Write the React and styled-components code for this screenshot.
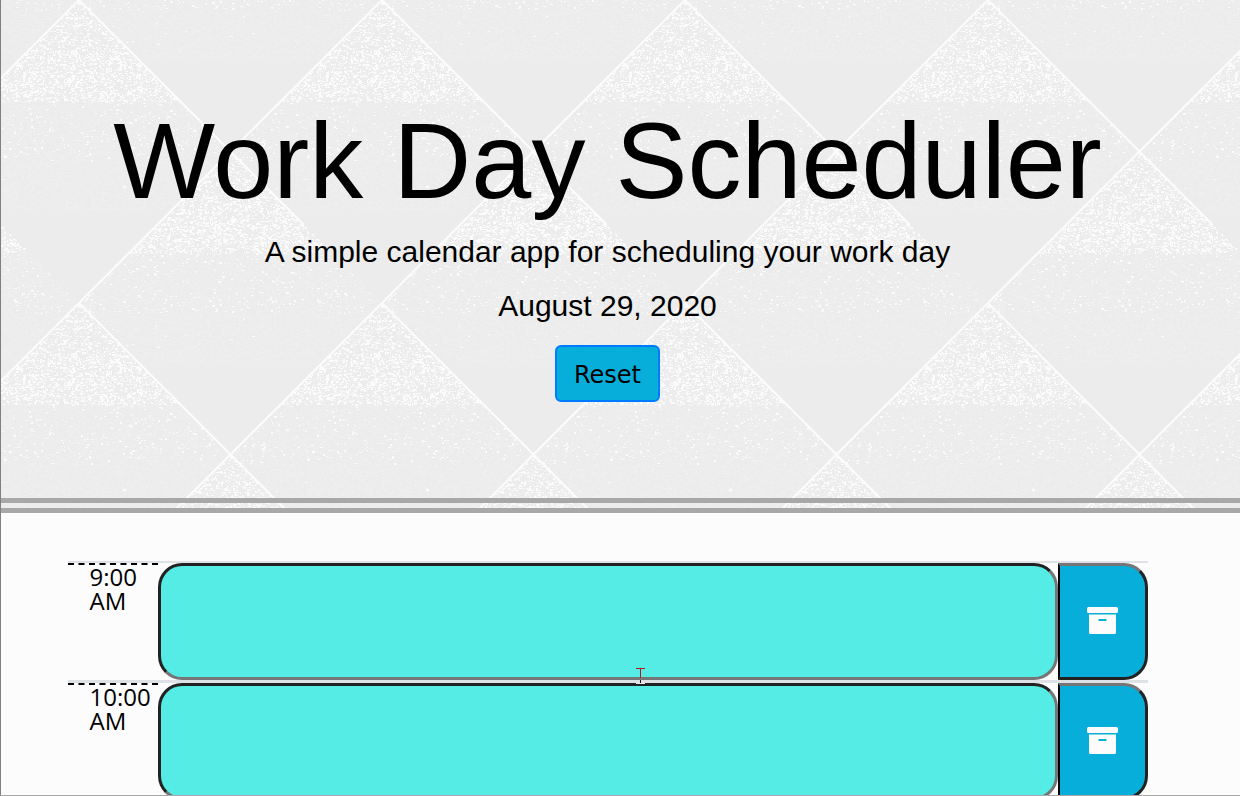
import React from "react";
import styled, { createGlobalStyle } from "styled-components";

const TILE = 303;
const HALF = TILE / 2;
const APEX = 78;

// Share of seeded specks in a diamond at a given distance below its top corner.
function grain(depth) {
  if (depth < 50) return 0.14;
  if (depth < 102) return 0.17;
  if (depth < 130) return 0.018;
  if (depth < 161) return 0.018;
  if (depth < 200) return 0.001;
  return 0;
}

function buildTile() {
  let seed = 20200829;
  const random = () => {
    seed = (Math.imul(seed, 1664525) + 1013904223) >>> 0;
    return seed / 4294967296;
  };
  const apexes = [
    [APEX, 0],
    [APEX + HALF, -HALF],
  ];
  let dots = "";
  let haze = "";
  for (let y = 0; y < TILE; y += 1) {
    for (let x = 0; x < TILE; x += 1) {
      for (const [ax, ay] of apexes) {
        const dx = Math.abs(((x - ax + TILE + HALF) % TILE) - HALF);
        const dy = (y - ay + TILE) % TILE;
        const inside = dx < Math.min(dy, TILE - dy);
        if (inside) {
          const roll = random();
          if (roll < grain(dy)) {
            const width = 1 + Math.floor(random() * 2.4);
            const height = random() < 0.3 ? 2 : 1;
            dots += `M${x} ${y}h${width}v${height}h-${width}z`;
          } else if (dy < 210 && roll > 0.86) {
            haze += `M${x} ${y}h2v1h-2z`;
          }
        }
      }
    }
  }
  const lines = `M${APEX - TILE} ${-TILE}l${TILE * 2} ${TILE * 2}M${APEX} 0l${TILE} ${TILE}M${APEX + TILE} ${-TILE}l${-TILE * 2} ${TILE * 2}M${APEX + TILE} 0l${-TILE} ${TILE}`;
  const svg = `<svg xmlns="http://www.w3.org/2000/svg" width="${TILE}" height="${TILE}"><rect width="${TILE}" height="${TILE}" fill="#ececec"/><path fill="#efefef" d="${haze}"/><path fill="#fbfbfb" d="${dots}"/><path fill="none" stroke="#fcfcfc" stroke-width="2" d="${lines}"/></svg>`;
  return `data:image/svg+xml,${encodeURIComponent(svg)}`;
}

const tile = buildTile();

const GlobalStyle = createGlobalStyle`
  *, *::before, *::after { box-sizing: border-box; }
  body { margin: 0; background: #fcfcfc; color: #000; }
`;

const Page = styled.div`
  position: relative;
  height: 100vh;
  overflow: hidden;
  border-left: 1px solid #808080;
  border-bottom: 1px solid #a8a8a8;
  background: #fcfcfc;
  font-family: "Open Sans", sans-serif;
`;

const Header = styled.header`
  display: flex;
  flex-direction: column;
  align-items: center;
  padding: 96px 26px 96px 0;
  border-bottom: 15px double #a8a8a8;
  background-color: #ececec;
  background-image: url("${tile}");
  font-family: "Liberation Sans", Arial, sans-serif;
  text-align: center;
`;

const Title = styled.h1`
  margin: 0 0 12px;
  font-size: 108px;
  font-weight: 400;
  line-height: 129px;
`;

const Lead = styled.p`
  margin: 0 0 24px;
  font-size: 30px;
  line-height: 30px;
`;

const ResetButton = styled.button`
  height: 57px;
  padding: 2px 17px 0;
  border: 2px solid #007bff;
  border-radius: 6px;
  background: #07aed9;
  color: #000;
  font-family: Verdana, "DejaVu Sans", sans-serif;
  font-size: 24px;
  line-height: 36px;
`;

const Planner = styled.main`
  padding: 48px 26px 0 0;
`;

const Rows = styled.div`
  max-width: 1080px;
  margin: 0 auto;
  border-top: 2px solid #dee2e6;
`;

const Row = styled.form`
  display: grid;
  grid-template-columns: 1fr 10fr 1fr;
  height: 120px;
  border-bottom: 3px solid #dee2e6;
`;

const Hour = styled.label`
  padding-left: 22px;
  border-top: 2px dashed #000;
  font-size: 24px;
  line-height: 24px;
`;

const Task = styled.textarea`
  display: block;
  width: 100%;
  height: 100%;
  padding: 12px 22px;
  border: 3px solid;
  border-color: #222 #767676 #767676 #222;
  border-radius: 24px;
  background: #55ece5;
  font: inherit;
  font-size: 24px;
  resize: none;
`;

const SaveButton = styled.button`
  display: flex;
  align-items: center;
  justify-content: center;
  padding: 0 0 2px;
  border: 3px solid;
  border-left-width: 2px;
  border-color: #767676 #222 #222 #000;
  border-radius: 0 24px 24px 0;
  background: #07aed9;
`;

const TextCursor = styled.svg`
  position: absolute;
  top: 668px;
  left: 635px;
  pointer-events: none;
`;

function ArchiveIcon() {
  return (
    <svg width="31" height="27" viewBox="0 0 31 27" aria-hidden="true">
      <rect width="31" height="6" rx="1.5" fill="#fcfcfc" />
      <path
        fill="#fcfcfc"
        fillRule="evenodd"
        d="M2 7.500H29V25.5Q29 27 27.500 27H3.500Q2 27 2 25.500ZM12 12Q11.500 12 11.500 12.500V13.500Q11.500 14 12 14H19Q19.500 14 19.500 13.500V12.500Q19.500 12 19 12Z"
      />
    </svg>
  );
}

const hours = ["9:00 AM", "10:00 AM"];

export default function App() {
  return (
    <Page>
      <GlobalStyle />
      <Header>
        <Title>Work Day Scheduler</Title>
        <Lead>A simple calendar app for scheduling your work day</Lead>
        <Lead>August 29, 2020</Lead>
        <ResetButton type="button">Reset</ResetButton>
      </Header>
      <Planner>
        <Rows>
          {hours.map((hour, index) => (
            <Row key={hour} onSubmit={(event) => event.preventDefault()}>
              <Hour htmlFor={`task-${index}`}>{hour}</Hour>
              <Task id={`task-${index}`} />
              <SaveButton type="submit" aria-label={`Save ${hour}`}>
                <ArchiveIcon />
              </SaveButton>
            </Row>
          ))}
        </Rows>
      </Planner>
      <TextCursor width="9" height="16" viewBox="0 0 9 16" aria-hidden="true">
        <path fill="#b5151b" d="M0 0h9v1H5v9H4V1H0z" />
        <path fill="#2a0b0b" d="M4 12h1v3H4z" />
        <path fill="#e8e8e8" d="M0 15h9v1H0z" />
      </TextCursor>
    </Page>
  );
}
